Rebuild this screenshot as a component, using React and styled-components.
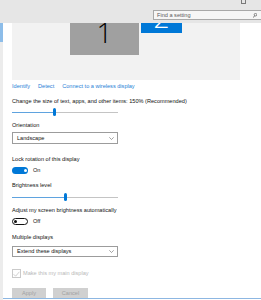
import React from "react";
import styled, { createGlobalStyle } from "styled-components";

const Global = createGlobalStyle`
  html, body { margin: 0; padding: 0; background: #fff; }
  body {
    font-family: "Liberation Sans", Arial, sans-serif;
    width: 261px;
    height: 300px;
    overflow: hidden;
  }
`;

const Window = styled.div`
  position: relative;
  width: 261px;
  height: 300px;
  overflow: hidden;
  display: flex;
  background: #fff;
`;

const Nav = styled.aside`
  width: 3px;
  flex: none;
  background: #ececec;
  display: flex;
  flex-direction: column;
`;

const NavIndicator = styled.div`
  margin-top: 23px;
  height: 19px;
  background: #8dbde9;
`;

const Main = styled.main`
  flex: 1;
  min-width: 0;
  padding-left: 9px;
  display: flex;
  flex-direction: column;
`;

const Header = styled.header`
  position: absolute;
  top: 0;
  left: 0;
  right: 0;
  height: 23px;
  background: #e6e6e6;
  z-index: 2;
  display: flex;
  flex-direction: column;
`;

const TitleBar = styled.div`
  height: 10px;
  display: flex;
  justify-content: flex-end;
  padding-right: 15px;
`;

const RestoreGlyph = styled.span`
  width: 3px;
  height: 4px;
  margin-top: -2px;
  border: 1px solid #7a7a7a;
`;

const SearchBox = styled.div`
  height: 10px;
  margin-left: 153px;
  margin-right: -3px;
  box-sizing: border-box;
  border: 1px solid #a8a8a8;
  background: #f6f6f6;
  display: flex;
  align-items: center;
  gap: 2px;
  padding: 0 6px 0 3px;
  font-size: 5.6px;
  line-height: 7px;
  color: #5a5a5a;
  overflow: hidden;
`;

const SearchText = styled.span`
  flex: 1;
  min-width: 0;
  white-space: nowrap;
`;

const Arrangement = styled.section`
  position: relative;
  flex: none;
  width: 228px;
  height: 80px;
  background: #f2f2f2;
`;

const Monitor = styled.div`
  position: absolute;
  left: ${(p) => p.$x}px;
  top: ${(p) => p.$y}px;
  width: ${(p) => p.$w}px;
  height: ${(p) => p.$h}px;
  background: ${(p) => (p.$active ? "#0078d7" : "#a0a0a0")};
  color: ${(p) => (p.$active ? "#fff" : "#000")};
  display: flex;
  align-items: center;
  justify-content: center;
  font-family: "Open Sans", Roboto, sans-serif;
  font-weight: 300;
  font-size: 28px;
  line-height: 1;
  overflow: hidden;
`;

const Links = styled.nav`
  display: flex;
  gap: 8px;
  margin-top: 3px;
  height: 7px;
  line-height: 7px;
  font-size: 5.6px;
`;

const Link = styled.a`
  color: #1f80d6;
  text-decoration: none;
  white-space: nowrap;
`;

const Label = styled.div`
  margin-top: ${(p) => p.$mt}px;
  height: 7px;
  line-height: 7px;
  font-size: 5.6px;
  color: #111;
  white-space: nowrap;
`;

const Slider = styled.div`
  margin-top: ${(p) => p.$mt}px;
  width: 106px;
  height: 8px;
  flex: none;
  display: flex;
  align-items: center;
`;

const SliderFill = styled.span`
  height: 1px;
  background: #5fa3df;
  flex: none;
`;

const SliderThumb = styled.span`
  width: 3px;
  height: 8px;
  border-radius: 1.5px;
  background: #0078d7;
  flex: none;
`;

const SliderRest = styled.span`
  flex: 1;
  height: 1px;
  background: #c4c4c4;
`;

const Select = styled.div`
  margin-top: ${(p) => p.$mt}px;
  width: 106px;
  height: ${(p) => p.$h}px;
  box-sizing: border-box;
  border: 1px solid #9c9c9c;
  background: #fff;
  display: flex;
  align-items: center;
  justify-content: space-between;
  padding: 0 3px 0 4px;
  font-size: 5.6px;
  line-height: 7px;
  color: #111;
  white-space: nowrap;
`;

const ToggleRow = styled.div`
  margin-top: ${(p) => p.$mt}px;
  height: 7px;
  display: flex;
  align-items: center;
  gap: 5px;
  font-size: 5.6px;
  line-height: 7px;
  color: #111;
`;

const Switch = styled.span`
  width: 16px;
  height: 7px;
  box-sizing: border-box;
  border-radius: 3.5px;
  display: flex;
  align-items: center;
  justify-content: ${(p) => (p.$on ? "flex-end" : "flex-start")};
  padding: ${(p) => (p.$on ? "0 1.5px" : "0 0.6px")};
  background: ${(p) => (p.$on ? "#0078d7" : "#fff")};
  border: ${(p) => (p.$on ? "none" : "1.2px solid #111")};
`;

const Knob = styled.span`
  width: 3px;
  height: 3px;
  border-radius: 50%;
  background: ${(p) => (p.$on ? "#fff" : "#111")};
`;

const CheckRow = styled.label`
  margin-top: 12px;
  height: 9px;
  display: flex;
  align-items: center;
  gap: 2px;
  font-size: 5.6px;
  line-height: 7px;
  color: #b8b8b8;
  white-space: nowrap;
`;

const CheckBox = styled.span`
  width: 9px;
  height: 9px;
  box-sizing: border-box;
  border: 1px solid #cacaca;
  display: flex;
  align-items: center;
  justify-content: center;
`;

const Buttons = styled.div`
  margin-top: 10px;
  display: flex;
  gap: 7px;
`;

const Button = styled.button`
  width: ${(p) => p.$w}px;
  height: 10px;
  padding: 0;
  border: none;
  background: #d0d0d0;
  color: #a2a2a2;
  font-family: "Liberation Sans", Arial, sans-serif;
  font-size: 5.6px;
  line-height: 7px;
`;

const BottomEdge = styled.div`
  height: 1px;
  margin-left: -9px;
  background: #8db7e2;
`;

const Chevron = () => (
  <svg width="5" height="3" viewBox="0 0 5 3">
    <path d="M0.3 0.3 L2.5 2.5 L4.7 0.3" fill="none" stroke="#666" strokeWidth="0.6" />
  </svg>
);

const SearchIcon = () => (
  <svg width="4" height="5" viewBox="0 0 4 5">
    <circle cx="2.5" cy="1.7" r="1.3" fill="none" stroke="#444" strokeWidth="0.6" />
    <path d="M1.6 2.7 L0.3 4.6" stroke="#444" strokeWidth="0.7" />
  </svg>
);

const CheckMark = () => (
  <svg width="7" height="6" viewBox="0 0 7 6">
    <path d="M0.6 3.2 L2.6 5.2 L6.4 0.8" fill="none" stroke="#c4c4c4" strokeWidth="0.8" />
  </svg>
);

const RangeSlider = ({ value, mt }) => (
  <Slider $mt={mt}>
    <SliderFill style={{ width: value }} />
    <SliderThumb />
    <SliderRest />
  </Slider>
);

const Toggle = ({ on, mt }) => (
  <ToggleRow $mt={mt}>
    <Switch $on={on}>
      <Knob $on={on} />
    </Switch>
    <span>{on ? "On" : "Off"}</span>
  </ToggleRow>
);

export default function App() {
  return (
    <>
      <Global />
      <Window>
        <Header>
          <TitleBar>
            <RestoreGlyph />
          </TitleBar>
          <SearchBox>
            <SearchText>Find a setting</SearchText>
            <SearchIcon />
          </SearchBox>
        </Header>
        <Nav>
          <NavIndicator />
        </Nav>
        <Main>
          <Arrangement>
            <Monitor $x={58} $y={8} $w={69} $h={47}>1</Monitor>
            <Monitor $x={129} $y={0} $w={41} $h={33} $active>2</Monitor>
          </Arrangement>
          <Links>
            <Link>Identify</Link>
            <Link>Detect</Link>
            <Link>Connect to a wireless display</Link>
          </Links>
          <Label $mt={8}>Change the size of text, apps, and other items: 150% (Recommended)</Label>
          <RangeSlider value={41} mt={3} />
          <Label $mt={6}>Orientation</Label>
          <Select $mt={3} $h={12}>
            <span>Landscape</span>
            <Chevron />
          </Select>
          <Label $mt={11.5}>Lock rotation of this display</Label>
          <Toggle on mt={4.5} />
          <Label $mt={8}>Brightness level</Label>
          <RangeSlider value={51.5} mt={4} />
          <Label $mt={5.5}>Adjust my screen brightness automatically</Label>
          <Toggle on={false} mt={4.5} />
          <Label $mt={8.5}>Multiple displays</Label>
          <Select $mt={5.5} $h={11}>
            <span>Extend these displays</span>
            <Chevron />
          </Select>
          <CheckRow>
            <CheckBox>
              <CheckMark />
            </CheckBox>
            <span>Make this my main display</span>
          </CheckRow>
          <Buttons>
            <Button $w={34}>Apply</Button>
            <Button $w={35}>Cancel</Button>
          </Buttons>
          <BottomEdge />
        </Main>
      </Window>
    </>
  );
}
